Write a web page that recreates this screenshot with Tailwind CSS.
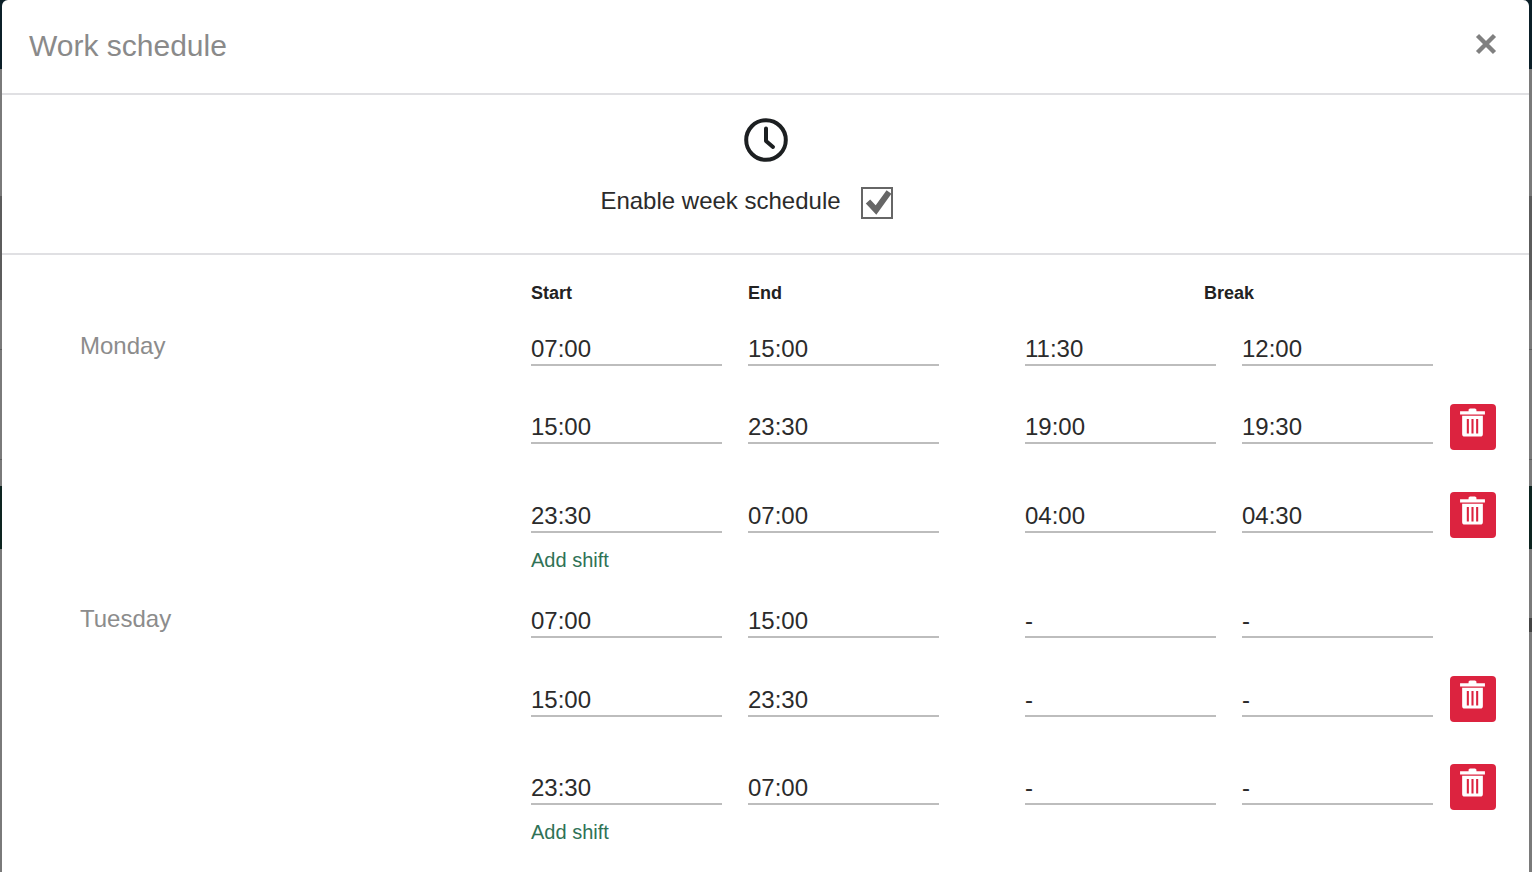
<!DOCTYPE html>
<html><head><meta charset="utf-8"><script src="https://cdn.jsdelivr.net/npm/@tailwindcss/browser@4"></script></head>
<body class="m-0 h-[872px] w-[1532px] overflow-hidden bg-[#7a7a7a] font-['Liberation_Sans',Arial,sans-serif]">
<div class="relative h-[872px] w-[1532px] bg-[#7a7a7a]">
  <div class="absolute left-0 top-0 h-[69px] w-full bg-[#0b1f28]"></div>
  <div class="absolute left-0 top-[196px] h-[104px] w-full bg-[#5c5c5c]"></div>
  <div class="absolute left-0 top-[349px] h-px w-full bg-[#5c5c5c]"></div>
  <div class="absolute left-0 top-[459px] h-px w-full bg-[#5c5c5c]"></div>
  <div class="absolute left-0 top-[486px] h-[63px] w-full bg-[#0d2420]"></div>
  <div class="absolute left-[1529px] top-[618px] h-[14px] w-[3px] bg-[#444]"></div>
  <div class="absolute left-[2px] top-0 h-[872px] w-[1527px] rounded-tl-[6px] rounded-tr-[6px] bg-white">
    <div class="flex h-[95px] items-center justify-between border-b-2 border-[#e0e0e3] pl-[27px] pr-[32px]">
      <span class="pb-[2px] text-[30px] leading-none text-[#8a8a8a]">Work schedule</span>
      <svg class="mb-[5px]" width="22" height="22" viewBox="0 0 22 22"><path d="M2.500 2.500 19.500 19.500M19.500 2.500 2.500 19.500" stroke="#808080" stroke-width="4.400"/></svg>
    </div>
    <div class="flex h-[160px] flex-col items-center border-b-2 border-[#e0e0e3] pt-[22px]">
      <svg width="46" height="46" viewBox="0 0 46 46" fill="none"><circle cx="23" cy="23" r="19.800" stroke="#1c1f21" stroke-width="4"/><path d="M23 11.500V24l7 6" stroke="#1c1f21" stroke-width="4" stroke-linecap="round" stroke-linejoin="round"/></svg>
      <div class="mr-[38px] mt-[19px] flex items-center gap-[20px]">
        <span class="text-[24px] leading-[28px] text-[#2b2b2b]">Enable week schedule</span>
        <span class="mt-[5px] block h-[32px] w-[32px] border-2 border-[#666]">
          <svg class="overflow-visible" width="28" height="28" viewBox="0 0 28 28"><path d="M5 12.500 13 21 26 3" fill="none" stroke="#666" stroke-width="6"/></svg>
        </span>
      </div>
    </div>
    <div class="pt-[28px]">
      <div class="flex h-[20px] text-[18px] font-bold leading-[20px] text-[#222]">
        <div class="w-[529px]"></div><div class="w-[217px]">Start</div><div class="w-[277px]">End</div><div class="w-[408px] pl-[179px]">Break</div>
      </div>
      <!-- Monday -->
      <div class="mt-[24px] flex h-[39px] items-end"><div class="w-[529px] self-start pl-[78px] pt-[5px] text-[24px] leading-[28px] text-[#8c8c8c]">Monday</div>
        <div class="flex items-end gap-[26px] text-[24px] leading-[28px] text-[#2b2b2b]">
          <div class="w-[191px] border-b-2 border-[#bdbdbd] pb-[1px]">07:00</div><div class="w-[191px] border-b-2 border-[#bdbdbd] pb-[1px]">15:00</div><div class="ml-[60px] w-[191px] border-b-2 border-[#bdbdbd] pb-[1px]">11:30</div><div class="w-[191px] border-b-2 border-[#bdbdbd] pb-[1px]">12:00</div>
        </div>
      </div>
      <div class="mt-[39px] flex h-[39px] items-end"><div class="w-[529px]"></div>
        <div class="flex items-end gap-[26px] text-[24px] leading-[28px] text-[#2b2b2b]">
          <div class="w-[191px] border-b-2 border-[#bdbdbd] pb-[1px]">15:00</div><div class="w-[191px] border-b-2 border-[#bdbdbd] pb-[1px]">23:30</div><div class="ml-[60px] w-[191px] border-b-2 border-[#bdbdbd] pb-[1px]">19:00</div><div class="w-[191px] border-b-2 border-[#bdbdbd] pb-[1px]">19:30</div>
          <button class="mb-[-6px] -ml-[9px] flex h-[46px] w-[46px] items-center justify-center rounded-[4px] bg-[#dc233f] pb-[10px] pr-[2px]"><svg width="25" height="29" viewBox="0 0 24 28" fill="#fff"><path d="M0 3.200h8.200V1.500L9.500.5h5l1.300 1v1.700H24v3H0zM2 7.500h20V25a2.500 2.500 0 0 1-2.500 2.500h-15A2.500 2.500 0 0 1 2 25zM6.500 10.500v14h2v-14zM11 10.500v14h2v-14zM15.500 10.500v14h2v-14z" fill-rule="evenodd"/></svg></button>
        </div>
      </div>
      <div class="mt-[50px] flex h-[39px] items-end"><div class="w-[529px]"></div>
        <div class="flex items-end gap-[26px] text-[24px] leading-[28px] text-[#2b2b2b]">
          <div class="w-[191px] border-b-2 border-[#bdbdbd] pb-[1px]">23:30</div><div class="w-[191px] border-b-2 border-[#bdbdbd] pb-[1px]">07:00</div><div class="ml-[60px] w-[191px] border-b-2 border-[#bdbdbd] pb-[1px]">04:00</div><div class="w-[191px] border-b-2 border-[#bdbdbd] pb-[1px]">04:30</div>
          <button class="mb-[-5px] -ml-[9px] flex h-[46px] w-[46px] items-center justify-center rounded-[4px] bg-[#dc233f] pb-[9px] pr-[2px]"><svg width="25" height="29" viewBox="0 0 24 28" fill="#fff"><path d="M0 3.200h8.200V1.500L9.500.5h5l1.300 1v1.700H24v3H0zM2 7.500h20V25a2.500 2.500 0 0 1-2.500 2.500h-15A2.500 2.500 0 0 1 2 25zM6.500 10.500v14h2v-14zM11 10.500v14h2v-14zM15.500 10.500v14h2v-14z" fill-rule="evenodd"/></svg></button>
        </div>
      </div>
      <div class="mt-[15px] pl-[529px] text-[20px] leading-[24px] text-[#2f7256]">Add shift</div>
      <!-- Tuesday -->
      <div class="mt-[27px] flex h-[39px] items-end"><div class="w-[529px] self-start pl-[78px] pt-[6px] text-[24px] leading-[28px] text-[#8c8c8c]">Tuesday</div>
        <div class="flex items-end gap-[26px] text-[24px] leading-[28px] text-[#2b2b2b]">
          <div class="w-[191px] border-b-2 border-[#bdbdbd] pb-[1px]">07:00</div><div class="w-[191px] border-b-2 border-[#bdbdbd] pb-[1px]">15:00</div><div class="ml-[60px] w-[191px] border-b-2 border-[#bdbdbd] pb-[1px]">-</div><div class="w-[191px] border-b-2 border-[#bdbdbd] pb-[1px]">-</div>
        </div>
      </div>
      <div class="mt-[40px] flex h-[39px] items-end"><div class="w-[529px]"></div>
        <div class="flex items-end gap-[26px] text-[24px] leading-[28px] text-[#2b2b2b]">
          <div class="w-[191px] border-b-2 border-[#bdbdbd] pb-[1px]">15:00</div><div class="w-[191px] border-b-2 border-[#bdbdbd] pb-[1px]">23:30</div><div class="ml-[60px] w-[191px] border-b-2 border-[#bdbdbd] pb-[1px]">-</div><div class="w-[191px] border-b-2 border-[#bdbdbd] pb-[1px]">-</div>
          <button class="mb-[-5px] -ml-[9px] flex h-[46px] w-[46px] items-center justify-center rounded-[4px] bg-[#dc233f] pb-[9px] pr-[2px]"><svg width="25" height="29" viewBox="0 0 24 28" fill="#fff"><path d="M0 3.200h8.200V1.500L9.500.5h5l1.300 1v1.700H24v3H0zM2 7.500h20V25a2.500 2.500 0 0 1-2.500 2.500h-15A2.500 2.500 0 0 1 2 25zM6.500 10.500v14h2v-14zM11 10.500v14h2v-14zM15.500 10.500v14h2v-14z" fill-rule="evenodd"/></svg></button>
        </div>
      </div>
      <div class="mt-[49px] flex h-[39px] items-end"><div class="w-[529px]"></div>
        <div class="flex items-end gap-[26px] text-[24px] leading-[28px] text-[#2b2b2b]">
          <div class="w-[191px] border-b-2 border-[#bdbdbd] pb-[1px]">23:30</div><div class="w-[191px] border-b-2 border-[#bdbdbd] pb-[1px]">07:00</div><div class="ml-[60px] w-[191px] border-b-2 border-[#bdbdbd] pb-[1px]">-</div><div class="w-[191px] border-b-2 border-[#bdbdbd] pb-[1px]">-</div>
          <button class="mb-[-5px] -ml-[9px] flex h-[46px] w-[46px] items-center justify-center rounded-[4px] bg-[#dc233f] pb-[9px] pr-[2px]"><svg width="25" height="29" viewBox="0 0 24 28" fill="#fff"><path d="M0 3.200h8.200V1.500L9.500.5h5l1.300 1v1.700H24v3H0zM2 7.500h20V25a2.500 2.500 0 0 1-2.500 2.500h-15A2.500 2.500 0 0 1 2 25zM6.500 10.500v14h2v-14zM11 10.500v14h2v-14zM15.500 10.500v14h2v-14z" fill-rule="evenodd"/></svg></button>
        </div>
      </div>
      <div class="mt-[15px] pl-[529px] text-[20px] leading-[24px] text-[#2f7256]">Add shift</div>
    </div>
  </div>
</div>
</body></html>
